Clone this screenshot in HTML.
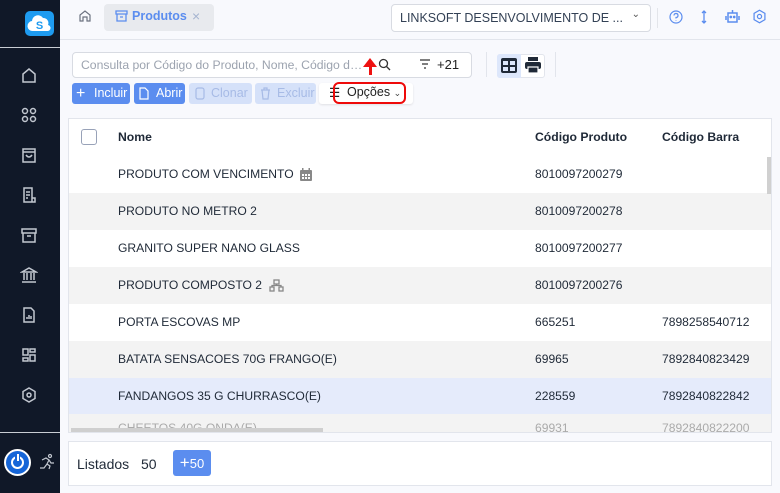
<!DOCTYPE html>
<html><head><meta charset="utf-8"><style>
*{box-sizing:border-box;margin:0;padding:0}
body{width:780px;height:493px;overflow:hidden;background:#f8f9fd;font-family:"Liberation Sans",sans-serif;position:relative;color:#1f2937}
.sb{position:absolute;left:0;top:0;width:60px;height:493px;background:#101828}
.abs{position:absolute}
.ic{position:absolute;left:20px;width:18px;height:18px}
.btn{position:absolute;top:83px;height:21px;border-radius:3px;font-size:12.5px;line-height:21px;color:#fff;white-space:nowrap}
.row{position:absolute;left:69px;width:702px;height:37px;font-size:12.1px;line-height:37px;color:#1f2937;white-space:nowrap}
.row span{position:absolute}
</style></head><body>
<div class="sb">
 <div class="abs" style="left:25px;top:11px;width:29px;height:25px;background:#1e9bf0;border-radius:5px"></div>
 <svg class="abs" style="left:27px;top:14px" width="25" height="19" viewBox="0 0 25 19"><path d="M6 17a5 5 0 0 1-1-10 6 6 0 0 1 11-3 5 5 0 0 1 5 7 3 3 0 0 1-1 6z" fill="#fff"/><text x="12.5" y="15" font-size="11" font-weight="bold" fill="#1e9bf0" text-anchor="middle" font-family="Liberation Sans">S</text></svg>
 <div class="abs" style="left:0;top:47px;width:60px;height:1px;background:#c8ccd4"></div>
 <svg class="ic" style="top:66px" viewBox="0 0 18 18" fill="none" stroke="#c2c7d0" stroke-width="1.5"><path d="M3 16V8l6-5 6 5v8z"/></svg>
 <svg class="ic" style="top:106px" viewBox="0 0 18 18" fill="none" stroke="#c2c7d0" stroke-width="1.5"><circle cx="5" cy="5" r="2.5"/><circle cx="13" cy="5" r="2.5"/><circle cx="5" cy="13" r="2.5"/><circle cx="13" cy="13" r="2.5"/></svg>
 <svg class="ic" style="top:146px" viewBox="0 0 18 18" fill="none" stroke="#c2c7d0" stroke-width="1.5"><path d="M3 3h12v13H3zM3 6h12M6 9q3 4 6 0"/></svg>
 <svg class="ic" style="top:186px" viewBox="0 0 18 18" fill="none" stroke="#c2c7d0" stroke-width="1.5"><path d="M4 2h8v14H4zM6 6h4M6 9h4M6 12h2M12 12h3v4h-3"/></svg>
 <svg class="ic" style="top:226px" viewBox="0 0 18 18" fill="none" stroke="#c2c7d0" stroke-width="1.5"><path d="M2 3h14v4H2zM3 7v9h12V7M7 10h4"/></svg>
 <svg class="ic" style="top:266px" viewBox="0 0 18 18" fill="none" stroke="#c2c7d0" stroke-width="1.5"><path d="M2 6l7-4 7 4zM4 7v7M7 7v7M11 7v7M14 7v7M2 16h14"/></svg>
 <svg class="ic" style="top:306px" viewBox="0 0 18 18" fill="none" stroke="#c2c7d0" stroke-width="1.5"><path d="M4 2h7l3 3v11H4zM7 13v-2M9 13V9M11 13v-3"/></svg>
 <svg class="ic" style="top:346px" viewBox="0 0 18 18" fill="none" stroke="#c2c7d0" stroke-width="1.5"><path d="M3 3h5v6H3zM10 3h5v3h-5zM3 12h5v3H3zM10 9h5v6h-5z"/></svg>
 <svg class="ic" style="top:386px" viewBox="0 0 18 18" fill="none" stroke="#c2c7d0" stroke-width="1.5"><path d="M9 2l6 3.5v7L9 16l-6-3.5v-7z"/><circle cx="9" cy="9" r="2"/></svg>
 <div class="abs" style="left:0;top:432px;width:60px;height:1px;background:#c8ccd4"></div>
 <div class="abs" style="left:4px;top:449px;width:27px;height:27px;border-radius:50%;background:#1565d8;border:2px solid #fff"></div>
 <div class="abs" style="left:11px;top:456px;width:13px;height:13px;border-radius:50%;border:2.5px solid #fff"></div>
 <div class="abs" style="left:15px;top:453px;width:5px;height:9px;background:#1565d8"></div>
 <div class="abs" style="left:16.5px;top:454px;width:2.5px;height:7px;background:#fff"></div>
 <svg class="abs" style="left:38px;top:453px" width="18" height="18" viewBox="0 0 18 18" fill="none" stroke="#c2c7d0" stroke-width="1.2"><circle cx="12" cy="3" r="1.5"/><path d="M4 7l4-2 3 2-2 4 3 2-1 3M9 11l-3 4H2M11 7l2 3h3"/></svg>
</div>
<svg class="abs" style="left:78px;top:9px" width="14" height="14" viewBox="0 0 14 14" fill="none" stroke="#6b7280" stroke-width="1.2"><path d="M2 12V6l5-4 5 4v6H9V8H5v4z"/></svg>
<div class="abs" style="left:104px;top:4px;width:110px;height:27px;background:#e8eaee;border-radius:4px"></div>
<svg class="abs" style="left:115px;top:10px" width="13" height="12" viewBox="0 0 13 12" fill="none" stroke="#5b8def" stroke-width="1.3"><path d="M1 1h11v3H1zM2 4v7h9V4M5 7h3"/></svg>
<div class="abs" style="left:132px;top:9px;font-size:12.5px;font-weight:bold;color:#5b8def">Produtos</div>
<div class="abs" style="left:192px;top:8px;font-size:14px;color:#a5b4d0">×</div>
<div class="abs" style="left:391px;top:4px;width:260px;height:28px;background:#fff;border:1px solid #d8dbe2;border-radius:4px;font-size:12.5px;line-height:26px;padding-left:8px;color:#334155;white-space:nowrap">LINKSOFT DESENVOLVIMENTO DE ...<span style="position:absolute;right:10px;top:-3px;font-size:10px;color:#555">⌄</span></div>
<div class="abs" style="left:657px;top:8px;width:1px;height:20px;background:#e3e5ea"></div>
<svg class="abs" style="left:669px;top:10px" width="14" height="14" viewBox="0 0 14 14" fill="none" stroke="#5b8def" stroke-width="1.2"><circle cx="7" cy="7" r="6"/><path d="M5 5.5q0-2 2-2t2 2-2 2v1M7 10.5v.5"/></svg>
<svg class="abs" style="left:698px;top:10px" width="12" height="14" viewBox="0 0 12 14" fill="none" stroke="#5b8def" stroke-width="1.3"><path d="M6 1v12M4 3l2-2 2 2M4 11l2 2 2-2"/></svg>
<svg class="abs" style="left:725px;top:9px" width="15" height="15" viewBox="0 0 15 15" fill="none" stroke="#5b8def" stroke-width="1.5"><path d="M7.5 1v3M3 4h9v9H3zM1 7v4M14 7v4"/><circle cx="5.8" cy="8" r=".6" fill="#5b8def"/><circle cx="9.2" cy="8" r=".6" fill="#5b8def"/></svg>
<svg class="abs" style="left:752px;top:9px" width="15" height="15" viewBox="0 0 18 18" fill="none" stroke="#5b8def" stroke-width="1.5"><path d="M9 1.5l6.5 3.75v7.5L9 16.5l-6.5-3.75v-7.5z"/><circle cx="9" cy="9" r="2.5"/></svg>
<div class="abs" style="left:60px;top:39px;width:720px;height:1px;background:#e2e5ec"></div>
<div class="abs" style="left:72px;top:52px;width:400px;height:26px;background:#fff;border:1px solid #d8dbe2;border-radius:4px"></div>
<div class="abs" style="left:81px;top:58px;width:285px;overflow:hidden;white-space:nowrap;text-overflow:ellipsis;font-size:12.2px;color:#9ca3af">Consulta por Código do Produto, Nome, Código de Barras</div>
<div class="abs" style="left:363px;top:58px;width:0;height:0;border-left:7px solid transparent;border-right:7px solid transparent;border-bottom:9px solid #ee1111"></div>
<div class="abs" style="left:368.5px;top:66px;width:3px;height:9px;background:#ee1111"></div>
<svg class="abs" style="left:378px;top:58px" width="13" height="13" viewBox="0 0 13 13" fill="none" stroke="#333" stroke-width="1.3"><circle cx="5.5" cy="5.5" r="4"/><path d="M8.5 8.5l3.5 3.5"/></svg>
<svg class="abs" style="left:419px;top:59px" width="12" height="10" viewBox="0 0 12 10" stroke="#333" stroke-width="1.2"><path d="M1 1h10M3 5h6M5 9h2"/></svg>
<div class="abs" style="left:437px;top:57px;font-size:13px;color:#222">+21</div>
<div class="abs" style="left:486px;top:52px;width:1px;height:25px;background:#e2e5ec"></div>
<div class="abs" style="left:497px;top:54px;width:48px;height:24px;border:1px solid #e2e5ec;border-radius:3px;background:#fff"></div>
<div class="abs" style="left:497px;top:54px;width:24px;height:24px;background:#dde7fb;border-radius:3px 0 0 3px"></div>
<svg class="abs" style="left:501px;top:58px" width="16" height="15" viewBox="0 0 16 15"><rect x="0" y="0" width="16" height="15" rx="2" fill="#1f2937"/><rect x="2" y="3" width="5" height="4" fill="#dde7fb"/><rect x="9" y="3" width="5" height="4" fill="#dde7fb"/><rect x="2" y="9" width="5" height="4" fill="#dde7fb"/><rect x="9" y="9" width="5" height="4" fill="#dde7fb"/></svg>
<svg class="abs" style="left:525px;top:57px" width="16" height="16" viewBox="0 0 16 16" fill="#1f2937"><rect x="3" y="0" width="10" height="4"/><rect x="0" y="5" width="16" height="7" rx="2"/><rect x="3" y="10" width="10" height="6" fill="#1f2937" stroke="#fff" stroke-width="1.2"/></svg>
<div class="abs" style="left:555px;top:52px;width:1px;height:25px;background:#e2e5ec"></div>
<div class="btn" style="left:72px;width:58px;background:#5b8def"><span style="position:absolute;left:4px;font-size:16px">+</span><span style="position:absolute;left:22px">Incluir</span></div>
<div class="btn" style="left:134px;width:51px;background:#5b8def"><svg style="position:absolute;left:5px;top:4px" width="10" height="13" viewBox="0 0 10 13" fill="none" stroke="#fff" stroke-width="1.2"><path d="M1 1h5l3 3v8H1z"/></svg><span style="position:absolute;left:22px">Abrir</span></div>
<div class="btn" style="left:189px;width:63px;background:#d5e1f9;color:#a7bbe6"><svg style="position:absolute;left:6px;top:4px" width="10" height="13" viewBox="0 0 10 13" fill="none" stroke="#a7bbe6" stroke-width="1.2"><rect x="1" y="1" width="8" height="11" rx="2"/></svg><span style="position:absolute;left:22px">Clonar</span></div>
<div class="btn" style="left:255px;width:61px;background:#d5e1f9;color:#a7bbe6"><svg style="position:absolute;left:5px;top:4px" width="11" height="13" viewBox="0 0 11 13" fill="none" stroke="#a7bbe6" stroke-width="1.2"><path d="M1 3h9M4 3V1h3v2M2 3l1 9h5l1-9"/></svg><span style="position:absolute;left:22px">Excluir</span></div>
<div class="btn" style="left:319px;width:94px;background:#fff;color:#222;box-shadow:0 1px 2px rgba(0,0,0,.1)"><span style="position:absolute;left:10px">☰</span></div>
<div class="abs" style="left:333px;top:82px;width:73px;height:22px;border:2.5px solid #ee0a0a;border-radius:6px;font-size:12.5px;line-height:17px;padding-left:12px;color:#222;white-space:nowrap">Opções <span style="font-size:9px;color:#444">⌄</span></div>
<div class="abs" style="left:68px;top:118px;width:704px;height:315px;background:#fff;border:1px solid #e2e5ec;overflow:hidden">
 <div class="abs" style="left:0;top:37px;width:704px;height:1px;background:#e2e5ec"></div>
 <div class="abs" style="left:12px;top:10px;width:16px;height:16px;border:1px solid #98a2b8;border-radius:3px"></div>
 <div class="abs" style="left:49px;top:11px;font-size:12.2px;font-weight:bold;color:#1f2937">Nome</div>
 <div class="abs" style="left:466px;top:11px;font-size:12.2px;font-weight:bold;color:#1f2937">Código Produto</div>
 <div class="abs" style="left:593px;top:11px;font-size:12.2px;font-weight:bold;color:#1f2937">Código Barra</div>
</div>
<div class="row" style="top:156px;background:#fff"><span style="left:49px">PRODUTO COM VENCIMENTO</span><svg style="position:absolute;left:231px;top:12px" width="12" height="13" viewBox="0 0 12 13" fill="#888"><rect x="0" y="2" width="12" height="11" rx="1"/><rect x="2" y="0" width="1.5" height="3"/><rect x="8.5" y="0" width="1.5" height="3"/><g fill="#fff"><rect x="2" y="6" width="2" height="2"/><rect x="5" y="6" width="2" height="2"/><rect x="8" y="6" width="2" height="2"/><rect x="2" y="9" width="2" height="2"/><rect x="5" y="9" width="2" height="2"/><rect x="8" y="9" width="2" height="2"/></g></svg><span style="left:466px">8010097200279</span></div>
<div class="row" style="top:193px;background:#f3f3f3"><span style="left:49px">PRODUTO NO METRO 2</span><span style="left:466px">8010097200278</span></div>
<div class="row" style="top:230px;background:#fff"><span style="left:49px">GRANITO SUPER NANO GLASS</span><span style="left:466px">8010097200277</span></div>
<div class="row" style="top:267px;background:#f3f3f3"><span style="left:49px">PRODUTO COMPOSTO 2</span><svg style="position:absolute;left:200px;top:12px" width="15" height="13" viewBox="0 0 15 13" fill="none" stroke="#888" stroke-width="1.3"><rect x="5" y="1" width="5" height="4"/><rect x="1" y="8" width="4" height="4"/><rect x="10" y="8" width="4" height="4"/><path d="M7.5 5v1.5H3V8M7.5 6.5H12V8"/></svg><span style="left:466px">8010097200276</span></div>
<div class="row" style="top:304px;background:#fff"><span style="left:49px">PORTA ESCOVAS MP</span><span style="left:466px">665251</span><span style="left:593px">7898258540712</span></div>
<div class="row" style="top:341px;background:#f3f3f3"><span style="left:49px">BATATA SENSACOES 70G FRANGO(E)</span><span style="left:466px">69965</span><span style="left:593px">7892840823429</span></div>
<div class="row" style="top:378px;background:#e5ebfb;height:36px"><span style="left:49px">FANDANGOS 35 G CHURRASCO(E)</span><span style="left:466px">228559</span><span style="left:593px">7892840822842</span></div>
<div class="row" style="top:414px;height:18px;background:#f3f3f3;overflow:hidden;color:#aaa"><span style="left:49px;top:-4px">CHEETOS 40G ONDA(E)</span><span style="left:466px;top:-4px">69931</span><span style="left:593px;top:-4px">7892840822200</span></div>
<div class="abs" style="left:71px;top:428px;width:252px;height:4px;background:#cfcfcf"></div>
<div class="abs" style="left:767px;top:157px;width:4px;height:37px;background:#d0d0d0"></div>
<div class="abs" style="left:68px;top:441px;width:704px;height:45px;background:#fff;border:1px solid #e2e5ec"></div>
<div class="abs" style="left:77px;top:456px;font-size:14px;color:#1f2937">Listados</div>
<div class="abs" style="left:141px;top:456px;font-size:14px;color:#1f2937">50</div>
<div class="abs" style="left:173px;top:450px;width:38px;height:26px;background:#5b8def;border-radius:3px;color:#fff;font-size:13px;line-height:26px;text-align:center"><span style="font-size:17px">+</span>50</div>
</body></html>
